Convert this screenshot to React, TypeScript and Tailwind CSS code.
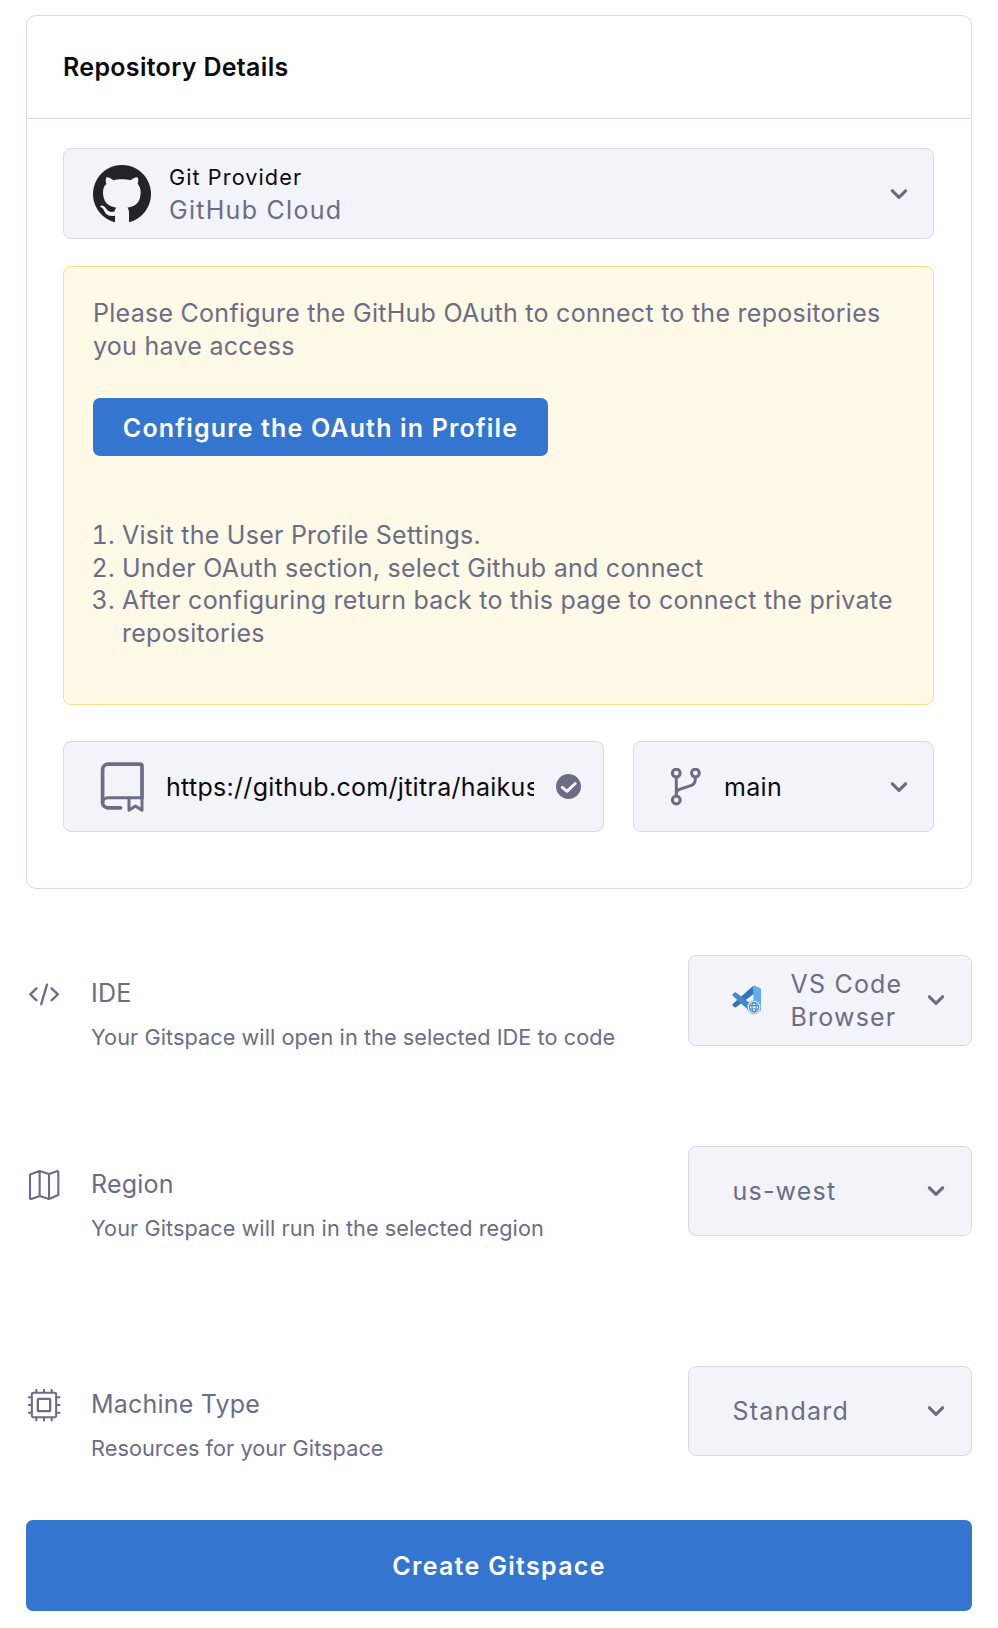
import type { ReactNode } from 'react';

function Chevron() {
  return (
    <svg className="h-[12px] w-[18px] shrink-0" viewBox="0 0 18 12" fill="none" stroke="#6b6d85" strokeWidth="3.200" strokeLinecap="round" strokeLinejoin="round">
      <path d="M2.4 2.8 9 9.3l6.6-6.5" />
    </svg>
  );
}

function GitHubIcon() {
  return (
    <svg className="h-[58px] w-[58px] shrink-0" viewBox="0 0 174 174" fill="#22242a">
      <path d="M66 171.500A87 87 0 1 1 108 171.500V142C108 136 106 131 103 128C127 125 143 113 143 82C143 70 139 62 134 56C136 52 137 46 134 37C126 36 116 43 112 46C100 42 74 42 62 46C58 43 48 36 40 37C37 46 38 52 40 56C34 62 30 70 30 82C30 113 47 125 70 128C67 131 66 134 65 139C58 142 47 142 41 133C36 125 30 121 24 122C21 123 21 125 24 127C30 130 32 134 35 140C40 151 52 155 66 152Z" />
    </svg>
  );
}

function RepoIcon() {
  return (
    <svg className="h-[51px] w-[45px] shrink-0" viewBox="0 0 45 51" fill="none" stroke="#6b6d85" strokeWidth="3.700" strokeLinecap="round" strokeLinejoin="round">
      <path d="M20.500 46.800H8A5.700 5.200 0 0 1 2.600 41.800V8.800A5.700 5.700 0 0 1 8 3.100H40A2 2 0 0 1 42 5.100V36.800" />
      <path d="M2.600 41.800A5.700 5 0 0 1 8 36.800H42" strokeWidth="3" />
      <path d="M29 36.800V49.200L35.500 44.900L42 49.200V36.800" strokeWidth="3" />
    </svg>
  );
}

function CheckIcon() {
  return (
    <svg className="h-[25px] w-[25px] shrink-0" viewBox="0 0 25 25" fill="none">
      <circle cx="12.500" cy="12.500" r="12.500" fill="#6b6d85" />
      <path d="M6.300 13.300 10.900 17.300 19.200 9.500" stroke="#f3f3fa" strokeWidth="3" strokeLinecap="round" strokeLinejoin="round" />
    </svg>
  );
}

function BranchIcon() {
  return (
    <svg className="h-[38px] w-[30px] shrink-0" viewBox="0 0 30 38" fill="none" stroke="#6b6d85" strokeWidth="3" strokeLinecap="round">
      <circle cx="5.300" cy="5.100" r="3.900" />
      <circle cx="24.400" cy="5.100" r="3.900" />
      <circle cx="5.300" cy="32" r="3.900" />
      <path d="M5.300 10V28M5.300 25.500C5.600 22.500 7 21.800 8.500 21.300L20.500 17.300C23.500 16.200 24.400 14 24.400 10" />
    </svg>
  );
}

function CodeIcon() {
  return (
    <svg className="h-[33px] w-[33px]" viewBox="0 0 33 33" fill="none" stroke="#6b6d85" strokeWidth="2.300" strokeLinecap="round" strokeLinejoin="round">
      <path d="M8.500 10.300 2.300 16.300 8.500 22.300M23.500 10.300 29.900 16.300 23.500 22.300M19 6.700 13.200 26.200" />
    </svg>
  );
}

function MapIcon() {
  return (
    <svg className="h-[33px] w-[33px]" viewBox="0 0 99 99" fill="none" stroke="#6b6d85" strokeWidth="6.300" strokeLinejoin="round">
      <path d="M8 16 35 6 63 15 87 7Q91 5 91 10V78L63 90 35 81 10 90Q6 91 6 87V17ZM35 6V81M63 15V90" />
    </svg>
  );
}

function ChipIcon() {
  return (
    <svg className="h-[33px] w-[33px]" viewBox="0 0 99 99" fill="none" stroke="#6b6d85" strokeWidth="6.200" strokeLinecap="round">
      <g transform="translate(-1.500 -1.500)">
        <rect x="13" y="13" width="73" height="73" rx="4" />
        <rect x="31" y="31" width="37" height="37" rx="3" strokeWidth="7" />
        <path d="M26.500 4V11M49.500 4V11M72.500 4V11M26.500 88V96M49.500 88V96M72.500 88V96M4 26.500H11M4 49.500H11M4 72.500H11M88 26.500H96M88 49.500H96M88 72.500H96" />
      </g>
    </svg>
  );
}

function VSCodeIcon() {
  return (
    <svg className="h-[30px] w-[29px] shrink-0" viewBox="0 0 87 90">
      <path d="M64 2 2 57Q0 60 2 62L8 67Q10 68 13 66L66 26Z" fill="#3873ad" />
      <path d="M8 22 2 28Q0 30 2 32L52 78 66 64 13 23Q10 21 8 22Z" fill="#4389cf" />
      <path d="M64 2Q66 0 69 2L84 9Q87 11 87 14V76L64 86Z" fill="#62adf2" />
      <circle cx="66" cy="67" r="20" fill="#f3f8fe" stroke="#62adf2" strokeWidth="2.500" />
      <g fill="none" stroke="#4389cf" strokeWidth="3.500">
        <circle cx="66" cy="67" r="14" />
        <ellipse cx="66" cy="67" rx="6" ry="14" />
        <path d="M53 62H79M53 72H79" />
      </g>
    </svg>
  );
}

type SettingProps = {
  icon: ReactNode;
  title: string;
  description: string;
  value: ReactNode;
  valueIcon?: ReactNode;
  className: string;
};

function Setting({ icon, title, description, value, valueIcon, className }: SettingProps) {
  return (
    <section className={`flex justify-between ${className}`}>
      <div className="flex pt-[22px]">
        <div className="mt-px mr-[30px] ml-[2px] h-[33px] w-[33px]">{icon}</div>
        <div>
          <h2 className="text-[25px] leading-[33px] tracking-[0.200px]">{title}</h2>
          <p className="mt-[14px] text-[21.700px] leading-[27px] tracking-[0.060px]">{description}</p>
        </div>
      </div>
      <button className="flex w-[284px] items-center rounded-[8px] border border-[#d9dae5] bg-[#f3f3fa] pr-[26px] pb-px pl-[43px] text-left">
        {valueIcon && <span className="mr-[29px]">{valueIcon}</span>}
        <span className="flex-1 pt-px pl-[0.500px] text-[25px] leading-[33px] tracking-[1.200px]">{value}</span>
        <Chevron />
      </button>
    </section>
  );
}

export default function App() {
  return (
    <main className="h-[1628px] w-[998px] bg-white px-[26px] pt-[15px] font-[Inter,sans-serif] text-[#6b6d85]">
      <section className="h-[874px] rounded-[10px] border border-[#d9dae5]">
        <header className="flex h-[103px] items-center border-b border-[#d9dae5] px-[36px]">
          <h1 className="text-[25px] leading-[33px] font-semibold tracking-[0.310px] text-[#0b0b0d]">Repository Details</h1>
        </header>
        <div className="pt-[29px] pr-[37px] pl-[36px]">
          <button className="flex h-[91px] w-full items-center rounded-[8px] border border-[#d9dae5] bg-[#f3f3fa] pr-[25px] pl-[29px] text-left">
            <GitHubIcon />
            <span className="ml-[18px] flex flex-1 flex-col leading-[33px]">
              <span className="text-[21.700px] tracking-[1.060px] text-[#0b0b0d]">Git Provider</span>
              <span className="text-[25px] tracking-[1.280px]">GitHub Cloud</span>
            </span>
            <Chevron />
          </button>

          <div className="mt-[27px] h-[439px] rounded-[8px] border border-[#fae08a] bg-[#fff9e8] px-[29px] pt-[30px] text-[25px] leading-[32.700px] tracking-[0.270px]">
            <p>
              Please Configure the GitHub OAuth to connect to the repositories
              <br />
              you have access
            </p>
            <button className="mt-[36px] flex h-[58px] w-[455px] items-center justify-center rounded-[7px] bg-[#3375cf] pt-[2px] text-[25px] font-semibold tracking-[1.150px] whitespace-nowrap text-white">
              Configure the OAuth in Profile
            </button>
            <ol className="mt-[62.600px] list-decimal pl-[29px] tracking-[0.250px]">
              <li>Visit the User Profile Settings.</li>
              <li>Under OAuth section, select Github and connect</li>
              <li>
                After configuring return back to this page to connect the private
                <br />
                repositories
              </li>
            </ol>
          </div>

          <div className="mt-[36px] flex h-[91px] gap-[29px] text-[25px] leading-[33px] tracking-[0.300px] text-[#0b0b0d]">
            <div className="flex w-[541px] items-center rounded-[8px] border border-[#d9dae5] bg-[#f3f3fa] pr-[22px] pl-[36px]">
              <RepoIcon />
              <span className="ml-[21px] w-[368px] overflow-hidden pt-[2px] whitespace-nowrap">https://github.com/jtitra/haikus</span>
              <span className="ml-auto">
                <CheckIcon />
              </span>
            </div>
            <button className="flex flex-1 items-center rounded-[8px] border border-[#d9dae5] bg-[#f3f3fa] pr-[25px] pl-[37px] text-left">
              <BranchIcon />
              <span className="ml-[23px] flex-1 pt-[2px]">main</span>
              <Chevron />
            </button>
          </div>
        </div>
      </section>

      <Setting
        className="mt-[66px] h-[91px]"
        icon={<CodeIcon />}
        title="IDE"
        description="Your Gitspace will open in the selected IDE to code"
        valueIcon={<VSCodeIcon />}
        value={
          <>
            VS Code
            <br />
            Browser
          </>
        }
      />
      <Setting
        className="mt-[100px] h-[90px]"
        icon={<MapIcon />}
        title="Region"
        description="Your Gitspace will run in the selected region"
        value="us-west"
      />
      <Setting
        className="mt-[130px] h-[90px]"
        icon={<ChipIcon />}
        title="Machine Type"
        description="Resources for your Gitspace"
        value="Standard"
      />

      <button className="mt-[64px] flex h-[91px] w-full items-center justify-center rounded-[7px] bg-[#3375cf] pt-[2px] text-[25px] font-semibold tracking-[1.300px] text-white">
        Create Gitspace
      </button>
    </main>
  );
}
